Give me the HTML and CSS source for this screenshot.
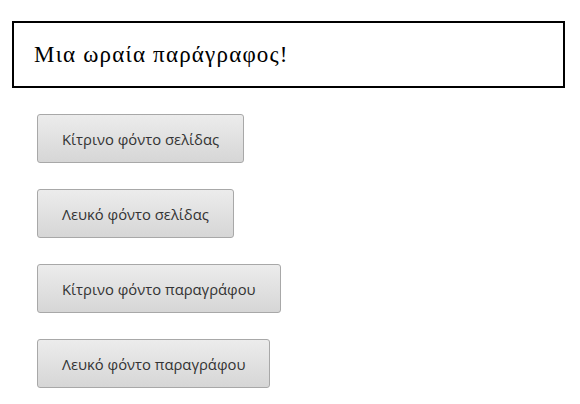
FILE: index.html
```html
<!DOCTYPE html>
<html lang="el">
<head>
<meta charset="utf-8">
<title>Παράγραφος</title>
<link rel="stylesheet" href="styles.css">
</head>
<body>
<p class="para">Μια ωραία παράγραφος!</p>
<div class="buttons">
  <button class="btn">Κίτρινο φόντο σελίδας</button>
  <button class="btn">Λευκό φόντο σελίδας</button>
  <button class="btn">Κίτρινο φόντο παραγράφου</button>
  <button class="btn">Λευκό φόντο παραγράφου</button>
</div>
</body>
</html>
```
FILE: styles.css
```css
html, body {
  margin: 0;
  padding: 0;
  background: #fff;
}
body {
  padding: 21px 15px 0 12px;
}
.para {
  margin: 0;
  border: 2px solid #000;
  padding: 20px 20px 19px;
  font-family: "Liberation Serif", "DejaVu Serif", serif;
  font-size: 23px;
  line-height: 24px;
  letter-spacing: 1.2px;
  color: #000;
}
.buttons {
  display: flex;
  flex-direction: column;
  align-items: flex-start;
  gap: 26px;
  margin: 26px 0 0 25px;
}
.btn {
  height: 49px;
  padding: 0 24px;
  border: 1px solid #a8a8a8;
  border-radius: 3px;
  background: linear-gradient(#ececec, #d6d6d6);
  font-family: "Open Sans", "DejaVu Sans", sans-serif;
  font-size: 14.8px;
  color: #333;
  cursor: pointer;
}
```
